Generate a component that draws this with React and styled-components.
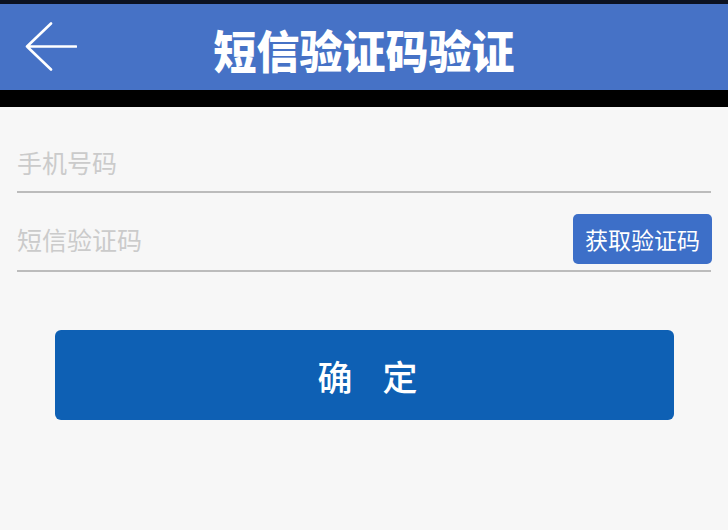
import React from 'react';
import styled, { createGlobalStyle } from 'styled-components';

const GlobalStyle = createGlobalStyle`
    html, body {
        margin: 0;
        padding: 0;
        background: #f7f7f7;
        font-family: 'Noto Sans CJK SC', 'Noto Sans', sans-serif;
    }
    * {
        box-sizing: border-box;
    }
`

const Page = styled.div`
    width: 728px;
    height: 530px;
    display: flex;
    flex-direction: column;
    background: #f7f7f7;
    overflow: hidden;
`

const StatusStrip = styled.div`
    height: 4px;
    background: #0b1222;
`

const Header = styled.header`
    height: 86px;
    background: #4672c6;
    display: grid;
    grid-template-columns: 1fr auto 1fr;
    align-items: center;
`

const BackButton = styled.button`
    justify-self: start;
    margin-left: 25px;
    padding: 0;
    border: none;
    background: none;
    display: flex;
    cursor: pointer;
`

const Title = styled.h1`
    margin: 0;
    padding-top: 4px;
    color: #fff;
    font-size: 43px;
    font-weight: 900;
    line-height: 1;
    transform: scaleY(1.06);
`

const Shadow = styled.div`
    height: 17px;
    background: #000;
`

const Form = styled.form`
    padding: 7px 17px 0;
    display: flex;
    flex-direction: column;
`

const Row = styled.div`
    height: 79px;
    display: flex;
    align-items: center;
    padding-top: ${({$pad}) => $pad}px;
    border-bottom: 2px solid #bcbcbc;
`

const Field = styled.input`
    flex: 1;
    min-width: 0;
    border: none;
    outline: none;
    background: transparent;
    padding: 0;
    font-family: inherit;
    font-size: 25px;
    color: #333;
    &::placeholder {
        color: #cbcbcb;
    }
`

const CodeButton = styled.button`
    width: 139px;
    height: 50px;
    margin-right: -1px;
    border: none;
    border-radius: 5px;
    background: #3d6fc8;
    color: #fff;
    font-family: inherit;
    font-size: 23px;
    padding: 0;
    cursor: pointer;
`

const Submit = styled.button`
    align-self: center;
    width: 619px;
    height: 90px;
    margin-top: 58px;
    margin-left: 1px;
    border: none;
    border-radius: 6px;
    background: #0e60b4;
    color: #fff;
    font-family: inherit;
    font-size: 35px;
    font-weight: 500;
    letter-spacing: 30px;
    padding: 0 0 0 36px;
    cursor: pointer;
`

const ArrowIcon = () => (
    <svg width="52" height="50" viewBox="0 0 52 50" fill="none">
        <path d="M51 24.5H2M26 1.5L2 24.5L26 47.5" stroke="#fff" strokeWidth="2.6" strokeLinecap="round" strokeLinejoin="round"/>
    </svg>
)

export default function App() {
    return (
        <Page>
            <GlobalStyle/>
            <StatusStrip/>
            <Header>
                <BackButton type="button" aria-label="返回"><ArrowIcon/></BackButton>
                <Title>短信验证码验证</Title>
                <div/>
            </Header>
            <Shadow/>
            <Form onSubmit={e => e.preventDefault()}>
                <Row $pad={18}>
                    <Field type="tel" placeholder="手机号码"/>
                </Row>
                <Row $pad={14}>
                    <Field type="text" placeholder="短信验证码"/>
                    <CodeButton type="button">获取验证码</CodeButton>
                </Row>
                <Submit type="submit">确定</Submit>
            </Form>
        </Page>
    );
}
